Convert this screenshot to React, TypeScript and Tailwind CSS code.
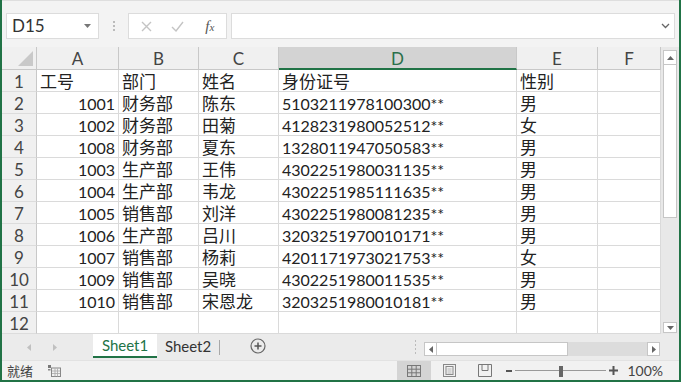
import React from "react";

const rows: string[][] = [
  ["1001", "财务部", "陈东", "5103211978100300", "男"],
  ["1002", "财务部", "田菊", "4128231980052512", "女"],
  ["1008", "财务部", "夏东", "1328011947050583", "男"],
  ["1003", "生产部", "王伟", "4302251980031135", "男"],
  ["1004", "生产部", "韦龙", "4302251985111635", "男"],
  ["1005", "销售部", "刘洋", "4302251980081235", "男"],
  ["1006", "生产部", "吕川", "3203251970010171", "男"],
  ["1007", "销售部", "杨莉", "4201171973021753", "女"],
  ["1009", "销售部", "吴晓", "4302251980011535", "男"],
  ["1010", "销售部", "宋恩龙", "3203251980010181", "男"],
];

const widths = ["w-[82px]", "w-[80px]", "w-[80px]", "w-[238px]", "w-[81px]", "w-[63px]"];
const letters = ["A", "B", "C", "D", "E", "F"];

function Cell({ w, children, right }: { w: string; children?: React.ReactNode; right?: boolean }) {
  return (
    <div
      className={`${w} h-[22px] shrink-0 border-r border-b border-[#dadada] bg-white whitespace-nowrap leading-[24px] text-[16px] text-[#222] ${
        right ? "text-right pr-[3px]" : "text-left pl-[3px]"
      }`}
    >
      {children}
    </div>
  );
}

function Cjk({ children }: { children: React.ReactNode }) {
  return <span className="text-[17px]">{children}</span>;
}

export default function App() {
  const dataRows: (string[] | null)[] = [["工号", "部门", "姓名", "身份证号", "性别"], ...rows, null];
  return (
    <div className="w-[681px] h-[382px] bg-[#f3f3f3] border-l-2 border-r-2 border-b-2 border-[#217346] flex flex-col overflow-hidden font-[family-name:Lato,'Noto_Sans_CJK_SC',sans-serif] select-none">
      {/* formula bar */}
      <div className="h-[47px] shrink-0 flex items-start pt-[12px] pl-[4px] border-t border-[#dedede]">
        <div className="w-[93px] h-[26px] bg-white border border-[#dcdcdc] flex items-center justify-between pl-[5px] pr-[7px]">
          <span className="text-[17px] text-[#333]">D15</span>
          <svg width="7" height="4" viewBox="0 0 7 4"><path d="M0 0h7L3.5 4z" fill="#777" /></svg>
        </div>
        <div className="w-[29px] h-[26px] flex flex-col items-center justify-center gap-[2px]">
          <div className="w-[2px] h-[2px] bg-[#bbb]" />
          <div className="w-[2px] h-[2px] bg-[#bbb]" />
          <div className="w-[2px] h-[2px] bg-[#bbb]" />
        </div>
        <div className="w-[99px] h-[26px] bg-white border border-[#dcdcdc] flex items-center">
          <div className="w-[33px] flex justify-center pl-[2px]">
            <svg width="11" height="11" viewBox="0 0 11 11"><path d="M1 1l9 9M10 1l-9 9" stroke="#c4c4c4" strokeWidth="1.4" /></svg>
          </div>
          <div className="w-[33px] flex justify-center">
            <svg width="13" height="11" viewBox="0 0 13 11"><path d="M1 6l4 4 7-9" stroke="#c4c4c4" strokeWidth="1.4" fill="none" /></svg>
          </div>
          <div className="w-[33px] flex justify-center">
            <span className="italic font-[family-name:'Liberation_Serif',serif] text-[15px] text-[#555] leading-none">
              f<span className="text-[11px]">x</span>
            </span>
          </div>
        </div>
        <div className="ml-[4px] w-[444px] h-[26px] bg-white border border-[#dcdcdc] flex items-center justify-end pr-[4px]">
          <svg width="9" height="6" viewBox="0 0 9 6"><path d="M1 1l3.5 3.5L8 1" stroke="#666" strokeWidth="1.3" fill="none" /></svg>
        </div>
      </div>

      {/* grid + vertical scrollbar */}
      <div className="h-[287px] shrink-0 flex">
        <div className="w-[659px] shrink-0 flex flex-col bg-white">
          {/* header row */}
          <div className="h-[23px] flex bg-[#f0f0f0]">
            <div className="w-[35px] h-[23px] shrink-0 border-r border-b border-[#c8c8c8] relative">
              <svg className="absolute right-[3px] bottom-[3px]" width="15" height="15" viewBox="0 0 15 15"><path d="M15 0V15H0z" fill="#c9c9c9" /></svg>
            </div>
            {letters.map((l, i) =>
              l === "D" ? (
                <div key={l} className={`${widths[i]} h-[23px] shrink-0 bg-[#d3d3d3] border-r border-[#c8c8c8] border-b-2 border-b-[#217346] text-center leading-[24px] text-[17px] text-[#2a6f4a]`}>
                  {l}
                </div>
              ) : (
                <div key={l} className={`${widths[i]} h-[23px] shrink-0 border-r border-b border-[#c8c8c8] text-center leading-[24px] text-[17px] text-[#444]`}>
                  {l}
                </div>
              )
            )}
          </div>
          {dataRows.map((r, ri) => (
            <div key={ri} className="h-[22px] flex">
              <div className="w-[35px] h-[22px] shrink-0 bg-[#f0f0f0] border-r border-b border-r-[#c8c8c8] border-b-[#dcdcdc] text-center leading-[24px] text-[17px] text-[#444]">
                {ri + 1}
              </div>
              {r ? (
                <>
                  <Cell w={widths[0]} right={ri > 0}>
                    {ri === 0 ? <Cjk>{r[0]}</Cjk> : r[0]}
                  </Cell>
                  <Cell w={widths[1]}><Cjk>{r[1]}</Cjk></Cell>
                  <Cell w={widths[2]}><Cjk>{r[2]}</Cjk></Cell>
                  <Cell w={widths[3]}>
                    {ri === 0 ? <Cjk>{r[3]}</Cjk> : <>{r[3]}**</>}
                  </Cell>
                  <Cell w={widths[4]}><Cjk>{r[4]}</Cjk></Cell>
                  <Cell w={widths[5]} />
                </>
              ) : (
                widths.map((w, wi) => <Cell key={wi} w={w} />)
              )}
            </div>
          ))}
        </div>
        {/* vertical scrollbar */}
        <div className="w-[18px] shrink-0 flex flex-col items-center bg-[#e8e8e8] pt-[3px] pb-[1px] pl-[2px] pr-[2px]">
          <div className="w-[14px] h-[15px] bg-white border border-[#c6c6c6] flex items-center justify-center">
            <svg width="7" height="4" viewBox="0 0 7 4"><path d="M0 4h7L3.5 0z" fill="#666" /></svg>
          </div>
          <div className="w-[14px] h-[153px] bg-white border border-[#c6c6c6] border-t-0" />
          <div className="flex-1" />
          <div className="w-[14px] h-[11px] bg-white border border-[#c6c6c6] flex items-center justify-center">
            <svg width="7" height="4" viewBox="0 0 7 4"><path d="M0 0h7L3.5 4z" fill="#666" /></svg>
          </div>
        </div>
      </div>

      {/* sheet tabs bar */}
      <div className="h-[26px] shrink-0 flex items-start bg-[#ebebeb]">
        <div className="w-[91px] h-[26px] flex items-center">
          <div className="ml-[23px] w-[8px] flex justify-center">
            <svg width="4" height="7" viewBox="0 0 4 7"><path d="M4 0v7L0 3.5z" fill="#c0c0c0" /></svg>
          </div>
          <div className="ml-[18px] w-[8px] flex justify-center">
            <svg width="4" height="7" viewBox="0 0 4 7"><path d="M0 0v7l4-3.5z" fill="#c0c0c0" /></svg>
          </div>
        </div>
        <div className="w-[64px] h-[24px] bg-white border-b-2 border-[#217346] flex items-center justify-center text-[15px] text-[#217346]">
          Sheet1
        </div>
        <div className="w-[62px] h-[24px] flex items-center justify-center text-[15px] text-[#333]">Sheet2</div>
        <div className="w-[1px] h-[15px] mt-[6px] bg-[#a8a8a8]" />
        <div className="ml-[30px] h-[24px] flex items-center">
          <svg width="16" height="16" viewBox="0 0 16 16">
            <circle cx="8" cy="8" r="7" stroke="#666" strokeWidth="1.2" fill="none" />
            <path d="M8 4.5v7M4.5 8h7" stroke="#555" strokeWidth="1.5" />
          </svg>
        </div>
        <div className="flex-1" />
        <div className="w-[14px] h-[26px] flex flex-col items-center justify-center gap-[2px] mr-[2px]">
          <div className="w-[1px] h-[2px] bg-[#bbb]" />
          <div className="w-[1px] h-[2px] bg-[#bbb]" />
          <div className="w-[1px] h-[2px] bg-[#bbb]" />
          <div className="w-[1px] h-[2px] bg-[#bbb]" />
        </div>
        <div className="w-[236px] h-[14px] mt-[8px] flex bg-[#dcdcdc]">
          <div className="w-[13px] h-[14px] bg-white border border-[#c6c6c6] flex items-center justify-center">
            <svg width="4" height="7" viewBox="0 0 4 7"><path d="M4 0v7L0 3.5z" fill="#666" /></svg>
          </div>
          <div className="w-[131px] h-[14px] bg-white border border-l-0 border-[#c6c6c6]" />
          <div className="flex-1" />
          <div className="w-[13px] h-[14px] bg-white border border-[#c6c6c6] flex items-center justify-center">
            <svg width="4" height="7" viewBox="0 0 4 7"><path d="M0 0v7l4-3.5z" fill="#666" /></svg>
          </div>
        </div>
        <div className="w-[19px]" />
      </div>

      {/* status bar */}
      <div className="h-[20px] shrink-0 flex items-center bg-[#f1f1f1] border-t border-[#e2e2e2]">
        <div className="w-[46px] pl-[5px] text-[13px] text-[#444] font-[family-name:'Noto_Sans_CJK_SC',sans-serif] leading-none">就绪</div>
        <svg width="13" height="12" viewBox="0 0 13 12">
          <rect x="0" y="0" width="3" height="3" fill="#777" />
          <rect x="3.5" y="3" width="9" height="8.5" fill="none" stroke="#888" strokeWidth="1" />
          <path d="M4 6h8M4 8.5h8M7 3.5v8M9.5 3.5v8" stroke="#aaa" strokeWidth="0.8" />
          <rect x="0" y="4" width="2.5" height="1.5" fill="#888" />
        </svg>
        <div className="flex-1" />
        <div className="w-[34px] h-[19px] bg-[#d4d4d4] flex items-center justify-center">
          <svg width="14" height="12" viewBox="0 0 14 12">
            <rect x="0.5" y="0.5" width="13" height="11" fill="none" stroke="#777" />
            <path d="M0.5 4.2h13M0.5 7.8h13M4.8 0.5v11M9.2 0.5v11" stroke="#777" />
          </svg>
        </div>
        <div className="w-[36px] flex items-center justify-center">
          <svg width="13" height="13" viewBox="0 0 13 13">
            <rect x="0.5" y="0.5" width="12" height="12" fill="none" stroke="#888" />
            <rect x="3" y="2.5" width="7" height="8" fill="none" stroke="#888" />
            <path d="M4.5 5h4M4.5 7h4M4.5 9h4" stroke="#aaa" strokeWidth="0.8" />
          </svg>
        </div>
        <div className="w-[36px] flex items-center justify-center">
          <svg width="14" height="13" viewBox="0 0 14 13">
            <path d="M0.5 0.5h13v12h-13z" fill="none" stroke="#777" />
            <path d="M4 0.5v6h6v-6" fill="none" stroke="#777" />
          </svg>
        </div>
        <div className="w-[12px] flex justify-center">
          <div className="w-[6px] h-[2px] bg-[#555]" />
        </div>
        <div className="w-[91px] h-[12px] relative flex items-center">
          <div className="w-full h-[1px] bg-[#999]" />
          <div className="absolute left-[44px] top-[1px] w-[4px] h-[11px] bg-[#666]" />
        </div>
        <div className="w-[14px] flex justify-center">
          <svg width="9" height="9" viewBox="0 0 9 9"><path d="M4.5 0v9M0 4.5h9" stroke="#555" strokeWidth="2" /></svg>
        </div>
        <div className="w-[43px] text-right text-[14px] text-[#444] leading-none">100%</div>
        <div className="w-[16px]" />
      </div>
    </div>
  );
}
